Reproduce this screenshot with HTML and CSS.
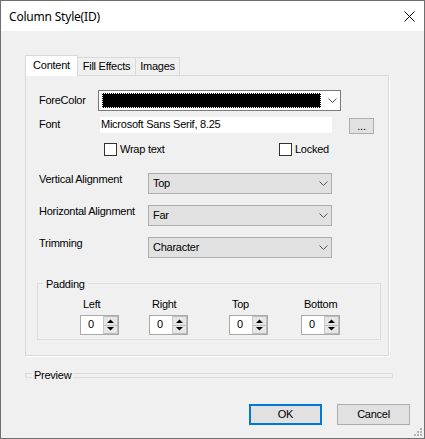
FILE: index.html
```html
<!DOCTYPE html>
<html>
<head>
<meta charset="utf-8">
<title>Column Style(ID)</title>
<link rel="stylesheet" href="styles.css">
</head>
<body>
<div class="window">
  <div class="titlebar">
    <span class="title">Column Style(ID)</span>
    <svg class="close" width="11" height="11" viewBox="0 0 11 11"><path d="M0.5 0.5L10.5 10.5M10.5 0.5L0.5 10.5" stroke="#000" stroke-width="1" fill="none"/></svg>
  </div>
  <div class="main">
    <div class="tabs">
      <div class="tab active">Content</div>
      <div class="tab fill">Fill Effects</div>
      <div class="tab images">Images</div>
    </div>
    <div class="panel">
      <div class="row row-fore">
        <span class="lbl lbl-fore">ForeColor</span>
        <div class="colorcombo">
          <div class="swatch"></div>
          <svg class="chev" width="9" height="5" viewBox="0 0 9 5"><path d="M0.5 0.5L4.5 4.5L8.5 0.5" stroke="#555" fill="none"/></svg>
        </div>
      </div>
      <div class="row row-font">
        <span class="lbl lbl-font">Font</span>
        <div class="fontbox">Microsoft Sans Serif, 8.25</div>
        <div class="dots">...</div>
      </div>
      <div class="row row-checks">
        <div class="check wrap"><span class="box"></span><span>Wrap text</span></div>
        <div class="check"><span class="box"></span><span>Locked</span></div>
      </div>
      <div class="row row-combo first">
        <span class="lbl lbl-wide">Vertical Alignment</span>
        <div class="combo"><span>Top</span><svg class="chev" width="9" height="5" viewBox="0 0 9 5"><path d="M0.5 0.5L4.5 4.5L8.5 0.5" stroke="#555" fill="none"/></svg></div>
      </div>
      <div class="row row-combo">
        <span class="lbl lbl-wide">Horizontal Alignment</span>
        <div class="combo"><span>Far</span><svg class="chev" width="9" height="5" viewBox="0 0 9 5"><path d="M0.5 0.5L4.5 4.5L8.5 0.5" stroke="#555" fill="none"/></svg></div>
      </div>
      <div class="row row-combo">
        <span class="lbl lbl-wide">Trimming</span>
        <div class="combo"><span>Character</span><svg class="chev" width="9" height="5" viewBox="0 0 9 5"><path d="M0.5 0.5L4.5 4.5L8.5 0.5" stroke="#555" fill="none"/></svg></div>
      </div>
      <div class="group padding-group">
        <span class="group-title">Padding</span>
        <div class="spins">
          <div class="spin-col"><span class="spin-lbl">Left</span><div class="spin"><span class="spin-val">0</span><div class="spin-btns"><span class="sb"><svg width="7" height="4" viewBox="0 0 7 4"><path d="M0 4L3.5 0.5L7 4Z" fill="#000"/></svg></span><span class="sb"><svg width="7" height="4" viewBox="0 0 7 4"><path d="M0 0L3.5 3.5L7 0Z" fill="#000"/></svg></span></div></div></div>
          <div class="spin-col"><span class="spin-lbl">Right</span><div class="spin"><span class="spin-val">0</span><div class="spin-btns"><span class="sb"><svg width="7" height="4" viewBox="0 0 7 4"><path d="M0 4L3.5 0.5L7 4Z" fill="#000"/></svg></span><span class="sb"><svg width="7" height="4" viewBox="0 0 7 4"><path d="M0 0L3.5 3.5L7 0Z" fill="#000"/></svg></span></div></div></div>
          <div class="spin-col"><span class="spin-lbl">Top</span><div class="spin"><span class="spin-val">0</span><div class="spin-btns"><span class="sb"><svg width="7" height="4" viewBox="0 0 7 4"><path d="M0 4L3.5 0.5L7 4Z" fill="#000"/></svg></span><span class="sb"><svg width="7" height="4" viewBox="0 0 7 4"><path d="M0 0L3.5 3.5L7 0Z" fill="#000"/></svg></span></div></div></div>
          <div class="spin-col"><span class="spin-lbl">Bottom</span><div class="spin"><span class="spin-val">0</span><div class="spin-btns"><span class="sb"><svg width="7" height="4" viewBox="0 0 7 4"><path d="M0 4L3.5 0.5L7 4Z" fill="#000"/></svg></span><span class="sb"><svg width="7" height="4" viewBox="0 0 7 4"><path d="M0 0L3.5 3.5L7 0Z" fill="#000"/></svg></span></div></div></div>
        </div>
      </div>
    </div>
    <div class="group preview-group">
      <span class="group-title">Preview</span>
    </div>
    <div class="buttons">
      <div class="btn ok">OK</div>
      <div class="btn">Cancel</div>
    </div>
  </div>
  <svg class="grip" width="10" height="9" viewBox="0 0 10 9">
    <rect x="7" y="0" width="2" height="2" fill="#b4b4b4"/>
    <rect x="4" y="3" width="2" height="2" fill="#b4b4b4"/>
    <rect x="7" y="3" width="2" height="2" fill="#b4b4b4"/>
    <rect x="1" y="6" width="2" height="2" fill="#b4b4b4"/>
    <rect x="4" y="6" width="2" height="2" fill="#b4b4b4"/>
    <rect x="7" y="6" width="2" height="2" fill="#b4b4b4"/>
  </svg>
</div>
</body>
</html>
```
FILE: styles.css
```css
* { box-sizing: border-box; }
html, body { margin: 0; padding: 0; }
body {
  font-family: "Liberation Sans", Arial, sans-serif;
  font-size: 11px;
  letter-spacing: -0.25px;
  color: #000;
  background: #f0f0f0;
}
.window {
  width: 425px;
  height: 439px;
  border: 1px solid #6f6f6f;
  background: #f0f0f0;
  position: relative;
  display: flex;
  flex-direction: column;
}
.titlebar {
  height: 30px;
  flex: none;
  background: #fff;
  display: flex;
  align-items: center;
  justify-content: space-between;
  padding: 0 9px 0 8px;
}
.title {
  font-family: "Noto Sans", sans-serif;
  font-size: 12px;
  letter-spacing: -0.2px;
}
.close { display: block; }
.main {
  padding: 24px 0 0 24px;
  display: flex;
  flex-direction: column;
}
.tabs {
  display: flex;
  align-items: flex-end;
  height: 20px;
}
.tab {
  height: 18px;
  border: 1px solid #d9d9d9;
  border-bottom: none;
  border-left: none;
  background: #f0f0f0;
  display: flex;
  justify-content: center;
  padding-top: 2px;
  line-height: 13px;
}
.tab.active {
  width: 53px;
  height: 21px;
  margin-bottom: -1px;
  border-left: 1px solid #d9d9d9;
  background: #fff;
  position: relative;
  z-index: 1;
  padding-top: 3px;
}
.tab.fill { width: 58px; }
.tab.images { width: 44px; }
.panel {
  width: 364px;
  height: 281px;
  border: 1px solid #d9d9d9;
  box-shadow: 1px 1px 0 #fff;
  background: #f0f0f0;
  padding: 14px 0 0 13px;
}
.row { display: flex; }
.lbl { line-height: 13px; flex: none; }
.chev { display: block; flex: none; margin-left: auto; }
.row-fore { height: 21px; align-items: center; }
.lbl-fore { width: 59px; }
.colorcombo {
  width: 243px;
  height: 21px;
  border: 1px solid #7a7a7a;
  background: #fff;
  display: flex;
  align-items: center;
  padding: 0 3px 0 3px;
}
.swatch {
  width: 219px;
  height: 15px;
  background: #000;
  border: 1px dotted #fff;
}
.row-font { margin-top: 6px; align-items: flex-start; height: 17px; }
.lbl-font { width: 61px; line-height: 14px; }
.fontbox {
  width: 232px;
  height: 16px;
  background: #fff;
  line-height: 14px;
  padding-left: 1px;
}
.dots {
  margin-left: 17px;
  margin-top: 1px;
  width: 25px;
  height: 16px;
  border: 1px solid #adadad;
  background: #e1e1e1;
  line-height: 14px;
  text-align: center;
}
.row-checks {
  margin-top: 9px;
  height: 13px;
  padding-left: 65px;
  align-items: center;
}
.check { display: flex; align-items: center; gap: 3px; line-height: 13px; }
.check.wrap { width: 175px; }
.box {
  width: 13px;
  height: 13px;
  border: 1px solid #333;
  background: #fff;
  flex: none;
}
.row-combo { margin-top: 11px; align-items: flex-start; height: 21px; }
.row-combo.first { margin-top: 17px; }
.lbl-wide { width: 109px; }
.combo {
  width: 184px;
  height: 21px;
  border: 1px solid #adadad;
  background: #e1e1e1;
  display: flex;
  align-items: center;
  padding: 0 3px 0 4px;
  line-height: 13px;
}
.group {
  position: relative;
  border: 1px solid #dcdcdc;
}
.group-title {
  position: absolute;
  background: #f0f0f0;
  line-height: 13px;
}
.padding-group {
  margin-top: 25px;
  margin-left: -2px;
  width: 344px;
  height: 57px;
  padding: 14px 0 0 42px;
}
.padding-group .group-title { left: 5px; top: -6px; padding: 0 3px; }
.spins {
  display: grid;
  grid-template-columns: 69px 80px 72px 39px;
}
.spin-col { display: flex; flex-direction: column; }
.spin-lbl { line-height: 13px; padding-left: 3px; }
.spin {
  margin-top: 4px;
  width: 39px;
  height: 20px;
  border: 1px solid #a9a9a9;
  background: #fff;
  display: flex;
}
.spin-val { flex: 1; padding-left: 7px; line-height: 17px; }
.spin-btns {
  width: 15px;
  display: flex;
  flex-direction: column;
  border-left: 1px solid #c8c8c8;
}
.sb {
  flex: 1;
  display: flex;
  align-items: center;
  justify-content: center;
  background: #e6e6e6;
  border: 1px solid #bcbcbc;
  border-left: none;
}
.sb + .sb { border-top: none; }
.sb svg { display: block; }
.preview-group {
  margin-top: 17px;
  width: 368px;
  height: 5px;
}
.preview-group .group-title { left: 6px; top: -5px; padding: 0 2px; }
.buttons {
  margin-top: 26px;
  display: flex;
  justify-content: flex-end;
  gap: 15px;
  padding-right: 14px;
}
.btn {
  width: 73px;
  height: 21px;
  border: 1px solid #adadad;
  background: #e1e1e1;
  display: flex;
  align-items: center;
  justify-content: center;
  line-height: 13px;
}
.btn.ok { border: 2px solid #0078d7; }
.grip { position: absolute; right: 1px; bottom: 1px; display: block; }
```
